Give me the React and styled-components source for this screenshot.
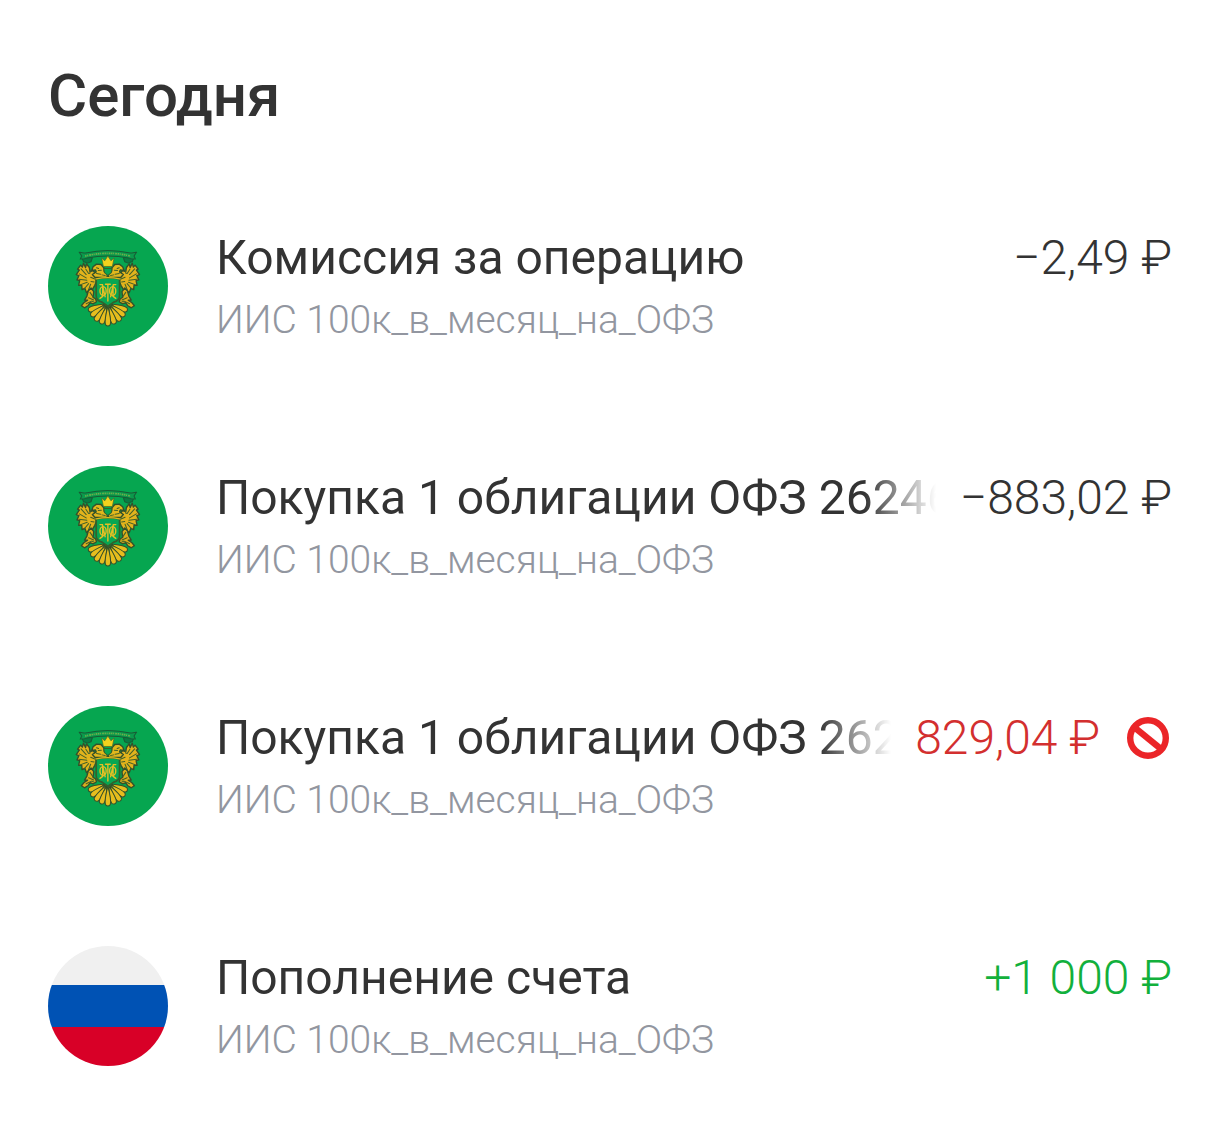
import React from 'react';
import styled, { createGlobalStyle } from 'styled-components';

const GlobalStyle = createGlobalStyle`
  * {
    box-sizing: border-box;
  }

  body {
    margin: 0;
    background-color: #fff;
    font-family: Roboto, 'Open Sans', sans-serif;
    color: #333;
  }
`;

const Page = styled.main`
  padding: 60px 48px;
`;

const DayTitle = styled.h1`
  margin: 0 0 94px;
  font-size: 60px;
  font-weight: 500;
  line-height: 72px;
`;

const OperationList = styled.ul`
  display: flex;
  flex-direction: column;
  gap: 116px;
  margin: 0;
  padding: 0;
  list-style: none;
`;

const Operation = styled.li`
  display: flex;
  align-items: flex-start;
  gap: 48px;
`;

const Logo = styled.svg`
  flex: none;
  width: 120px;
  height: 120px;
  border-radius: 50%;
`;

const Details = styled.div`
  flex: 1;
  min-width: 0;
`;

const TopLine = styled.div`
  display: flex;
  align-items: center;
  gap: 24px;
  font-size: 48px;
  line-height: 64px;
  white-space: nowrap;
`;

// Long names fade out before the amount
const Name = styled.span`
  flex: 1;
  min-width: 0;
  overflow: hidden;
  mask-image: linear-gradient(to left, transparent, #000 72px);
`;

const Amount = styled.span`
  font-weight: 300;
  color: ${props => props.$color || '#333'};
`;

const RejectedIcon = styled.svg`
  flex: none;
  width: 48px;
  height: 48px;
`;

const Account = styled.div`
  font-size: 39px;
  font-weight: 300;
  line-height: 60px;
  color: #9296a0;
`;

const operations = [
  { id: 1, logo: 'minfin', name: 'Комиссия за операцию', amount: '−2,49 ₽' },
  { id: 2, logo: 'minfin', name: 'Покупка 1 облигации ОФЗ 26246', amount: '−883,02 ₽' },
  { id: 3, logo: 'minfin', name: 'Покупка 1 облигации ОФЗ 26246', amount: '829,04 ₽', color: '#d32f2f', rejected: true },
  { id: 4, logo: 'russia', name: 'Пополнение счета', amount: '+1 000 ₽', color: '#12b03c' },
];

// Left half of the eagle, the right one is its mirror
const EagleHalf = () => (
  <g strokeLinejoin="round" strokeLinecap="round">
    {/* banner end */}
    <path d="M38 56l14-4 16 2-4 12-10 4-12-5z" fill="#087c42" stroke="#185c35" strokeWidth="3" />
    {/* wing */}
    <path
      d="M34 76l-9 12 5 3-9 13 8 3-6 13 8 2-3 14 9 0 1 13 8-4 5 13 9-10 6 4 9-16 4-10 0-23-9-11-9 3-2-12-8-11-3 11-6-13-3 12z"
      fill="#e2b31c"
      stroke="#34502a"
      strokeWidth="4"
    />
    <path
      d="M35 87l15 17M30 102l20 12M29 118l23 3M34 134l19-7M44 147l13-16M56 151l7-18M49 88l8 13M63 91l-3 10M63 112l12 5M64 125l9 1"
      fill="none"
      stroke="#40602a"
      strokeWidth="3"
    />
    {/* neck and head */}
    <path
      d="M111 113l-36-1-7-8 11-8-2-6-11 2 4-11 10-8 13 1 9 11 0 9 9 6z"
      fill="#e2b71c"
      stroke="#34502a"
      strokeWidth="4"
    />
    <path d="M80 84l6 2M85 92l9-1M80 101l12 2M96 105l9 2" fill="none" stroke="#40602a" strokeWidth="3" />
    {/* leg and orb */}
    <path
      d="M64 144l-8 9-4 15-7 12 9 0-10 7-8 10 9 6 10-6 6-9 10 3 9-6-3-9-7-4 2-17z"
      fill="#dcae1c"
      stroke="#34502a"
      strokeWidth="4"
    />
    <path d="M61 157l8 12M57 173l15 7M50 191l14-7M66 183l7 3" fill="none" stroke="#40602a" strokeWidth="3" />
  </g>
);

const tailFeathers = [
  { angle: 68, length: 62 },
  { angle: -68, length: 62 },
  { angle: 51, length: 64 },
  { angle: -51, length: 64 },
  { angle: 34, length: 66 },
  { angle: -34, length: 66 },
  { angle: 17, length: 67 },
  { angle: -17, length: 67 },
  { angle: 0, length: 70 },
];

const MinfinLogo = () => (
  <Logo viewBox="0 0 120 120" aria-hidden="true">
    <rect width="120" height="120" fill="#06a650" />
    <g transform="translate(21 13.6) scale(.344 .336)">
      {/* tail */}
      {tailFeathers.map(({ angle, length }) => (
        <g key={angle} transform={`translate(113 188) rotate(${angle})`}>
          <path
            d={`M0 10Q-11 ${length - 16} -7 ${length - 5}Q0 ${length + 3} 7 ${length - 5}Q11 ${length - 16} 0 10z`}
            fill="#e6bd1e"
            stroke="#34502a"
            strokeWidth="3"
          />
        </g>
      ))}
      <EagleHalf />
      <g transform="translate(226 0) scale(-1 1)">
        <EagleHalf />
      </g>
      {/* banner */}
      <path
        d="M30 38c6-1 12 3 18 2 42-10 88-10 130 0 6 1 12-3 18-2l-7 11 4 9c-6 0-13 0-19-3-40-8-82-8-122 0-6 3-13 3-19 3l4-9z"
        fill="#0b9a4c"
        stroke="#185c35"
        strokeWidth="3"
      />
      <path d="M47 49c44-11 88-11 132 0" fill="none" stroke="#6fb04a" strokeWidth="5" strokeDasharray="4 2 3 3 5 2" />
      {/* crown */}
      <path
        d="M100 80l-5-25 9 8 9-14 9 14 9-8-5 25z"
        fill="#f4d21d"
        stroke="#4c6727"
        strokeWidth="2"
        strokeLinejoin="round"
      />
      <path d="M101 86h24l-2 12-10 9-10-9z" fill="#08a652" stroke="#34602a" strokeWidth="3" />
      {/* shield */}
      <path
        d="M79 117q34-8 68 0v49q0 16-17 20l-17 12-17-12q-17-4-17-20z"
        fill="#08a652"
        stroke="#34602a"
        strokeWidth="5"
        strokeLinejoin="round"
      />
      <path d="M79 117q34-8 68 0" fill="none" stroke="#dcb51d" strokeWidth="4" strokeLinecap="round" />
      {/* monogram */}
      <g fill="none" stroke="#e5bf24" strokeWidth="4" strokeLinecap="round">
        <ellipse cx="99" cy="153" rx="9" ry="13" />
        <ellipse cx="127" cy="153" rx="9" ry="13" />
        <path d="M90 134h7l8 36M136 134h-7l-8 36M98 136v33l-8 6M128 136v33l8 6M106 133h14M113 133v50" />
      </g>
    </g>
  </Logo>
);

const RussiaLogo = () => (
  <Logo viewBox="0 0 120 120" aria-hidden="true">
    <rect width="120" height="120" fill="#f0f0f0" />
    <rect y="39" width="120" height="42" fill="#0052b4" />
    <rect y="81" width="120" height="39" fill="#d80027" />
  </Logo>
);

const Rejected = () => (
  <RejectedIcon viewBox="0 0 48 48" role="img" aria-label="Отклонено">
    <g fill="none" stroke="#eb2528" strokeWidth="6.4">
      <circle cx="24" cy="24" r="17.8" />
      <path d="M10 13l27 22" />
    </g>
  </RejectedIcon>
);

function App() {
  return (
    <>
      <GlobalStyle />
      <Page>
        <DayTitle>Сегодня</DayTitle>
        <OperationList>
          {operations.map(operation => (
            <Operation key={operation.id}>
              {operation.logo === 'minfin' ? <MinfinLogo /> : <RussiaLogo />}
              <Details>
                <TopLine>
                  <Name>{operation.name}</Name>
                  <Amount $color={operation.color}>{operation.amount}</Amount>
                  {operation.rejected && <Rejected />}
                </TopLine>
                <Account>ИИС 100к_в_месяц_на_ОФЗ</Account>
              </Details>
            </Operation>
          ))}
        </OperationList>
      </Page>
    </>
  );
}

export default App;
